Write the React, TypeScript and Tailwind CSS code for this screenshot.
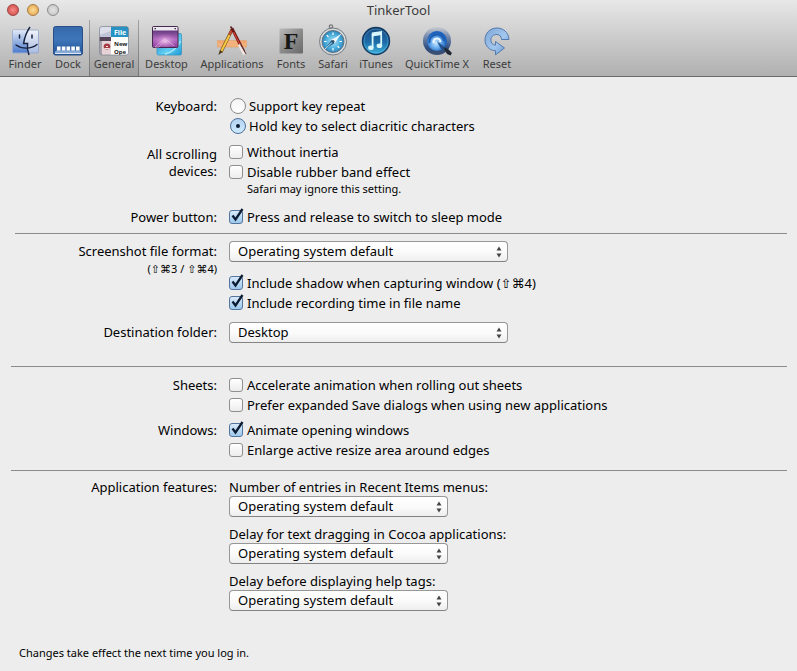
import { useState } from 'react';
import type { ReactNode } from 'react';

function FinderIcon() {
  return (
    <svg viewBox="0 0 30 30" className="w-[30px] h-[30px]">
      <defs>
        <linearGradient id="finderLeft" x1="0" y1="0" x2="0" y2="1">
          <stop offset="0" stopColor="#dfe8f8" />
          <stop offset="1" stopColor="#4d7ccb" />
        </linearGradient>
        <linearGradient id="finderRight" x1="0" y1="0" x2="0" y2="1">
          <stop offset="0" stopColor="#f1f4fb" />
          <stop offset="1" stopColor="#a9bce2" />
        </linearGradient>
      </defs>
      <rect x="2.500" y="4" width="26" height="23" rx="1" fill="url(#finderRight)" stroke="#8fa3cb" strokeWidth="0.8" />
      <path d="M3 4.4H17C15.500 9 14.500 13 14 17H17.200C17 20 17.200 23 18 26.600H3Z" fill="url(#finderLeft)" />
      <path d="M20 1C16.500 6 14.400 12 13.600 17.500H17.600C17 21 17.500 25 19 29" fill="none" stroke="#15213f" strokeWidth="1.400" />
      <path d="M9.500 9V12M22 9V12" stroke="#15213f" strokeWidth="1.500" strokeLinecap="round" />
      <path d="M6 19C12 23.300 21 23.300 27 18.500" fill="none" stroke="#15213f" strokeWidth="1.400" strokeLinecap="round" />
    </svg>
  );
}

function DockIcon() {
  return (
    <svg viewBox="0 0 30 30" className="w-[30px] h-[30px]">
      <defs>
        <linearGradient id="dockBg" x1="0" y1="0" x2="0" y2="1">
          <stop offset="0" stopColor="#3468ab" />
          <stop offset="0.450" stopColor="#3f76ba" />
          <stop offset="1" stopColor="#1f5194" />
        </linearGradient>
      </defs>
      <rect x="0.500" y="0.500" width="29" height="28.500" rx="2" fill="url(#dockBg)" stroke="#2a4f86" />
      <path d="M3 24.500H27L28.500 27H1.500Z" fill="#86a9d6" />
      <path d="M2 27.500H28" stroke="#dbe7f5" />
      <path d="M4 20.500h3.600v4H4zM8.800 20.500h3.600v4H8.800zM13.500 20.500h3.600v4h-3.600zM18.300 20.500h3.600v4h-3.600zM23 20.500h3.600v4H23z" fill="#fff" />
    </svg>
  );
}

function GeneralIcon() {
  return (
    <svg viewBox="0 0 30 30" className="w-[30px] h-[30px]">
      <defs>
        <clipPath id="generalClip">
          <rect x="0.500" y="0.500" width="29" height="28.500" rx="2.500" />
        </clipPath>
      </defs>
      <g clipPath="url(#generalClip)">
        <rect width="30" height="30" fill="#fff" />
        <rect width="12" height="11" fill="#bfc4d6" />
        <path d="M0 0H12V5L0 9Z" fill="#dcdfea" />
        <rect x="12" width="18" height="11" fill="#2793c4" />
        <rect y="11" width="12" height="4" fill="#554357" />
        <rect x="3" y="15" width="9" height="15" fill="#e6d3d7" />
        <rect y="15" width="3" height="15" fill="#a8a1ac" />
        <ellipse cx="8" cy="20.500" rx="3.300" ry="3" fill="#a63a42" />
        <path d="M5.500 22.500H10.500M7 20.500H9" stroke="#f6e4e4" />
        <text x="15" y="8.500" fontFamily="Noto Sans, sans-serif" fontSize="7" fontWeight="700" fill="#fff">File</text>
        <text x="15" y="19.500" fontFamily="Noto Sans, sans-serif" fontSize="6" fontWeight="700" fill="#222">New</text>
        <text x="15" y="28" fontFamily="Noto Sans, sans-serif" fontSize="6" fontWeight="700" fill="#222">Ope</text>
      </g>
      <rect x="0.500" y="0.500" width="29" height="28.500" rx="2.500" fill="none" stroke="#6b7380" strokeOpacity="0.600" />
    </svg>
  );
}

function DesktopIcon() {
  return (
    <svg viewBox="0 0 30 30" className="w-[30px] h-[30px]">
      <defs>
        <linearGradient id="deskFront" x1="0" y1="0" x2="0" y2="1">
          <stop offset="0.150" stopColor="#5d3478" />
          <stop offset="0.600" stopColor="#b069bd" />
          <stop offset="1" stopColor="#8b3f9c" />
        </linearGradient>
        <radialGradient id="deskGlow" cx="0.500" cy="0.650" r="0.500">
          <stop offset="0" stopColor="#f3cdf0" stopOpacity="0.900" />
          <stop offset="1" stopColor="#c979cf" stopOpacity="0" />
        </radialGradient>
        <linearGradient id="deskBack" x1="0" y1="0" x2="1" y2="1">
          <stop offset="0" stopColor="#1d7fc0" />
          <stop offset="0.600" stopColor="#5fcff2" />
          <stop offset="1" stopColor="#1e97d3" />
        </linearGradient>
      </defs>
      <rect x="5" y="7.500" width="24.500" height="21.500" rx="1.500" fill="url(#deskBack)" stroke="#2d8fbd" strokeWidth="0.700" />
      <path d="M13 28C18 27 25 23 28.500 15" fill="none" stroke="#b9ecfb" strokeWidth="1.800" opacity="0.800" />
      <rect x="0.500" y="0.500" width="25.500" height="21" rx="1.200" fill="url(#deskFront)" stroke="#46294f" />
      <rect x="1" y="5" width="24.500" height="16" fill="url(#deskGlow)" />
      <path d="M13 12L3 21H7L13.500 13L22 20" fill="none" stroke="#f3c6f0" strokeWidth="0.900" opacity="0.600" />
      <rect x="1" y="1" width="24.500" height="3.500" fill="#ece8ef" />
      <path d="M2.500 2.700H4M22.500 2.700H24" stroke="#3c3340" strokeWidth="1.300" />
    </svg>
  );
}

function ApplicationsIcon() {
  return (
    <svg viewBox="0 0 30 30" className="w-[30px] h-[30px]">
      <rect x="0.500" y="14.500" width="29" height="6.500" fill="#f3b27b" stroke="#e39f6a" strokeWidth="0.600" />
      <path d="M3 15V17.500M6 15V17.500M9 15V17.500M21 15V17.500M24 15V17.500M27 15V17.500" stroke="#d98b55" strokeWidth="0.700" />
      <path d="M15.300 3L4 26" stroke="#7b4b18" strokeWidth="3.200" />
      <path d="M12.500 9L4.200 25.500" stroke="#f5cb42" strokeWidth="2" />
      <path d="M15.500 2.500L12.500 8.500" stroke="#c94b3b" strokeWidth="2" />
      <path d="M3 24L1.300 29L5.600 26Z" fill="#453620" />
      <path d="M15 2.500L27 26" stroke="#6c1715" strokeWidth="2.800" />
      <path d="M16.500 6L23 18.500" stroke="#d54435" strokeWidth="1.200" />
      <path d="M22 18.500L27.500 28.500" stroke="#eee7e3" strokeWidth="2.600" />
      <path d="M23.500 18.500L29 28" stroke="#5f302b" strokeWidth="1" />
      <path d="M13.500 0.500L16 3.500" stroke="#5b2424" strokeWidth="1.600" />
    </svg>
  );
}

function FontsIcon() {
  return (
    <svg viewBox="0 0 30 30" className="w-[30px] h-[30px]">
      <defs>
        <linearGradient id="fontsBg" x1="0" y1="0" x2="1" y2="1">
          <stop offset="0" stopColor="#bababa" />
          <stop offset="0.500" stopColor="#8c8c8c" />
          <stop offset="1" stopColor="#686868" />
        </linearGradient>
      </defs>
      <rect x="3.500" y="2.500" width="23.500" height="25" rx="1" fill="url(#fontsBg)" />
      <text x="15" y="22.500" textAnchor="middle" fontFamily="Liberation Serif, serif" fontSize="24" fontWeight="700" fill="#171717">F</text>
    </svg>
  );
}

function SafariIcon() {
  return (
    <svg viewBox="0 0 30 32" className="w-[30px] h-[32px]">
      <defs>
        <radialGradient id="safariFace">
          <stop offset="0" stopColor="#b9e6f8" />
          <stop offset="0.600" stopColor="#4fb2dd" />
          <stop offset="1" stopColor="#2e86be" />
        </radialGradient>
      </defs>
      <circle cx="13" cy="2.500" r="1.700" fill="none" stroke="#777" strokeWidth="1.200" />
      <circle cx="15" cy="17.500" r="13.500" fill="#d6dbdd" stroke="#747a80" />
      <circle cx="15" cy="17.500" r="11" fill="url(#safariFace)" stroke="#66747f" />
      <path d="M15 8.500V11M15 24V26.500M6 17.500H8.500M21.500 17.500H24M8.700 11.200L10.500 13M19.500 22L21.300 23.800" stroke="#fff" strokeWidth="1.200" />
      <path d="M23 10L16.600 19.300L13.400 16Z" fill="#f4fbff" />
      <path d="M7 25L16.600 19.300L13.400 16Z" fill="#276b9d" />
      <path d="M7 25L23 10" stroke="#e5f5fc" strokeWidth="0.800" />
      <circle cx="15" cy="17.500" r="1.500" fill="#31505f" />
    </svg>
  );
}

function ITunesIcon() {
  return (
    <svg viewBox="0 0 30 30" className="w-[30px] h-[30px]">
      <defs>
        <linearGradient id="itunesBg" x1="0" y1="0" x2="0" y2="1">
          <stop offset="0" stopColor="#1a4a80" />
          <stop offset="0.550" stopColor="#1c6daa" />
          <stop offset="1" stopColor="#3fb4de" />
        </linearGradient>
      </defs>
      <circle cx="15" cy="15" r="13.500" fill="url(#itunesBg)" stroke="#123a62" strokeWidth="1.400" />
      <circle cx="15" cy="15" r="12" fill="none" stroke="#7cc5e7" strokeWidth="0.700" opacity="0.500" />
      <path d="M10.800 6.500L21 5V9L10.800 10.500Z" fill="#d7f6fc" />
      <path d="M11.600 8V21.500M20.200 7V19.500" fill="none" stroke="#d7f6fc" strokeWidth="1.800" />
      <ellipse cx="9.900" cy="21.700" rx="2.800" ry="2.300" fill="#d7f6fc" />
      <ellipse cx="18.400" cy="19.700" rx="2.800" ry="2.300" fill="#d7f6fc" />
    </svg>
  );
}

function QuickTimeIcon() {
  return (
    <svg viewBox="0 0 32 30" className="w-[32px] h-[30px]">
      <defs>
        <linearGradient id="qtRing" x1="0" y1="0" x2="0" y2="1">
          <stop offset="0" stopColor="#c9cdd4" />
          <stop offset="0.350" stopColor="#7589ab" />
          <stop offset="0.750" stopColor="#2e4d80" />
          <stop offset="1" stopColor="#3d4f70" />
        </linearGradient>
        <radialGradient id="qtInner" cx="0.450" cy="0.600">
          <stop offset="0" stopColor="#cfe8fd" />
          <stop offset="0.500" stopColor="#6aaeee" />
          <stop offset="1" stopColor="#1b62bd" />
        </radialGradient>
      </defs>
      <circle cx="16" cy="15" r="14" fill="url(#qtRing)" />
      <circle cx="16" cy="15" r="10" fill="url(#qtInner)" />
      <path d="M8.500 17C7.500 6.500 22.500 5.500 23 15" fill="none" stroke="#1f5cb0" strokeWidth="1.800" />
      <path d="M12.500 17C12 11.500 19.500 11 19.500 16" fill="none" stroke="#eef8ff" strokeWidth="2" />
      <path d="M16 15.500L22.500 20L24 24L20 23Z" fill="#24528f" />
      <path d="M22 21L27 23L31 27L29.500 29.500L26 28Z" fill="#222a38" />
    </svg>
  );
}

function ResetIcon() {
  return (
    <svg viewBox="0 0 30 30" className="w-[30px] h-[30px]">
      <defs>
        <linearGradient id="resetFill" x1="0" y1="0" x2="1" y2="1">
          <stop offset="0" stopColor="#7da4d6" />
          <stop offset="0.550" stopColor="#a3c8ee" />
          <stop offset="1" stopColor="#5a8fce" />
        </linearGradient>
      </defs>
      <path
        d="M27 13.500C26.500 6 21 2 14.800 2C7.500 2.200 3 7.500 3 14C3 20 7.500 24.500 13.500 24.700V28.800L22.500 22L13.500 15.500V19.200C10.500 18.800 8.800 16.800 8.800 14C9 10.500 11.800 8.300 15 8.500C17.800 8.700 19.500 10.700 19.500 13.500Z"
        fill="url(#resetFill)"
        stroke="#5379ae"
        strokeWidth="1"
        strokeLinejoin="round"
      />
    </svg>
  );
}

const tabs = [
  { name: 'Finder', width: 'w-[44px]', icon: <FinderIcon /> },
  { name: 'Dock', width: 'w-[42px]', icon: <DockIcon /> },
  { name: 'General', width: 'w-[50px]', icon: <GeneralIcon /> },
  { name: 'Desktop', width: 'w-[55px]', icon: <DesktopIcon /> },
  { name: 'Applications', width: 'w-[76px]', icon: <ApplicationsIcon /> },
  { name: 'Fonts', width: 'w-[42px]', icon: <FontsIcon /> },
  { name: 'Safari', width: 'w-[42px]', icon: <SafariIcon /> },
  { name: 'iTunes', width: 'w-[44px]', icon: <ITunesIcon /> },
  { name: 'QuickTime X', width: 'w-[78px]', icon: <QuickTimeIcon /> },
  { name: 'Reset', width: 'w-[42px]', icon: <ResetIcon /> },
];

function Row({ label, children, className = '' }: { label: ReactNode; children: ReactNode; className?: string }) {
  return (
    <div className={`grid grid-cols-[217px_1fr] gap-x-3 ${className}`}>
      <div className="text-right">{label}</div>
      <div>{children}</div>
    </div>
  );
}

function Checkbox({ label, defaultChecked = false }: { label: string; defaultChecked?: boolean }) {
  return (
    <label className="flex w-fit items-center gap-1 h-5 whitespace-nowrap">
      <span className="relative flex">
        <input
          type="checkbox"
          defaultChecked={defaultChecked}
          className="peer appearance-none w-3.5 h-3.5 rounded-[3px] border border-[#8f8f8f] bg-linear-to-b from-white to-[#ececec] checked:border-[#54759c] checked:from-[#d9eafa] checked:to-[#9cc8ec]"
        />
        <svg viewBox="0 0 16 16" className="hidden peer-checked:block pointer-events-none absolute left-0 -top-0.5 w-4 h-4">
          <path d="M3.500 7.500L6.500 11.500L13.500 1" fill="none" stroke="#0c1c33" strokeWidth="2.300" />
        </svg>
      </span>
      {label}
    </label>
  );
}

function Radio({ label, defaultChecked = false }: { label: string; defaultChecked?: boolean }) {
  return (
    <label className="flex w-fit items-center gap-[3px] h-5 pl-px whitespace-nowrap">
      <span className="relative flex">
        <input
          type="radio"
          name="keyboard"
          defaultChecked={defaultChecked}
          className="peer appearance-none w-4 h-4 rounded-full border border-[#8a8a8a] bg-linear-to-b from-[#f4f4f4] to-white checked:border-[#4d6f9b] checked:from-[#b4d3f1] checked:to-[#cdeafd]"
        />
        <span className="hidden peer-checked:block pointer-events-none absolute left-[6px] top-[6px] w-1 h-1 rounded-full bg-[#0c1c33]"></span>
      </span>
      {label}
    </label>
  );
}

function Popup({ id, value, width, options }: { id: string; value: string; width: string; options: string[] }) {
  return (
    <div className={`relative ${width}`}>
      <select
        id={id}
        defaultValue={value}
        className="block appearance-none w-full h-[21px] pl-2 pr-5 leading-[19px] rounded-[4px] border border-[#979797] border-b-[#838383] bg-linear-to-b from-white via-[#fbfbfb] to-[#eeeeee]"
      >
        {options.map(option => (
          <option key={option}>{option}</option>
        ))}
      </select>
      <svg viewBox="0 0 6 12" className="pointer-events-none absolute right-[6px] top-[5px] w-1.5 h-3">
        <path d="M3 0.500L5.500 4.500H0.500ZM3 11.500L5.500 7.500H0.500Z" fill="#444" />
      </svg>
    </div>
  );
}

const features = [
  { id: 'recent-items', label: 'Number of entries in Recent Items menus:' },
  { id: 'text-dragging', label: 'Delay for text dragging in Cocoa applications:' },
  { id: 'help-tags', label: 'Delay before displaying help tags:' },
];

export default function App() {
  const [active, setActive] = useState('General');

  return (
    <div className="min-h-screen bg-[#ededed] font-['Noto_Sans','DejaVu_Sans',sans-serif] text-[13px] leading-5 text-black">
      <header className="bg-linear-to-b from-[#e8e8e8] to-[#b0b0b0] border-b border-[#6a6a6a] text-[#3c3c3c]">
        <div className="grid grid-cols-[1fr_auto_1fr] items-center h-5">
          <div className="flex gap-2 pl-[7px]">
            <button aria-label="Close" className="w-3 h-3 rounded-full border border-[#9b4444] bg-radial from-[#f58c88] to-[#cc3e3e]"></button>
            <button aria-label="Minimize" className="w-3 h-3 rounded-full border border-[#a87a42] bg-radial from-[#fbdc94] to-[#e2a046]"></button>
            <button aria-label="Zoom" className="w-3 h-3 rounded-full border border-[#8c8c8c] bg-radial from-[#e4e4e4] to-[#c0c0c0]"></button>
          </div>
          <h1>TinkerTool</h1>
        </div>
        <nav className="flex h-14 pl-[3px]">
          {tabs.map(tab => (
            <button
              key={tab.name}
              onClick={() => setActive(tab.name)}
              className={`flex flex-col items-center shrink-0 pt-1 text-[11px] leading-4 whitespace-nowrap ${tab.width} ${
                active === tab.name ? 'border-x border-black/25 bg-linear-to-b from-transparent to-black/10' : ''
              }`}
            >
              <span className="flex items-end justify-center h-8">{tab.icon}</span>
              {tab.name}
            </button>
          ))}
        </nav>
      </header>

      <main>
        <section className="pt-[19px] pb-1.5">
          <Row label="Keyboard:">
            <Radio label="Support key repeat" />
            <Radio label="Hold key to select diacritic characters" defaultChecked />
          </Row>
          <Row
            className="mt-1.5"
            label={
              <div className="pt-1 leading-[17px]">
                All scrolling
                <br />
                devices:
              </div>
            }
          >
            <Checkbox label="Without inertia" />
            <Checkbox label="Disable rubber band effect" />
            <p className="pl-[18px] text-[11px] leading-[14px]">Safari may ignore this setting.</p>
          </Row>
          <Row className="mt-[11px]" label="Power button:">
            <Checkbox label="Press and release to switch to sleep mode" defaultChecked />
          </Row>
        </section>

        <hr className="ml-[15px] mr-2.5 border-[#8c8c8c]" />

        <section className="pt-[7px] pb-[23px]">
          <Row
            label={
              <>
                <label htmlFor="format" className="block">Screenshot file format:</label>
                <p className="text-[11px] leading-4">(⇧⌘3 / ⇧⌘4)</p>
              </>
            }
          >
            <Popup id="format" value="Operating system default" width="w-[279px]" options={['Operating system default', 'PNG', 'JPEG', 'TIFF', 'PDF']} />
            <div className="mt-[11px]">
              <Checkbox label="Include shadow when capturing window (⇧⌘4)" defaultChecked />
              <Checkbox label="Include recording time in file name" defaultChecked />
            </div>
          </Row>
          <Row className="mt-[9px]" label={<label htmlFor="destination">Destination folder:</label>}>
            <Popup id="destination" value="Desktop" width="w-[279px]" options={['Desktop', 'Documents', 'Pictures']} />
          </Row>
        </section>

        <hr className="ml-[11px] mr-2.5 border-[#8c8c8c]" />

        <section className="pt-2 pb-2.5">
          <Row label="Sheets:">
            <Checkbox label="Accelerate animation when rolling out sheets" />
            <Checkbox label="Prefer expanded Save dialogs when using new applications" />
          </Row>
          <Row className="mt-[5px]" label="Windows:">
            <Checkbox label="Animate opening windows" defaultChecked />
            <Checkbox label="Enlarge active resize area around edges" />
          </Row>
        </section>

        <hr className="ml-[11px] mr-2.5 border-[#8c8c8c]" />

        <section className="pt-[7px] leading-[18px]">
          <Row label="Application features:">
            <div className="flex flex-col gap-2">
              {features.map(feature => (
                <div key={feature.id}>
                  <label htmlFor={feature.id} className="block">{feature.label}</label>
                  <Popup id={feature.id} value="Operating system default" width="w-[219px]" options={['Operating system default', 'Custom']} />
                </div>
              ))}
            </div>
          </Row>
        </section>
      </main>

      <footer className="mt-[35px] pl-[19px] text-[11px] leading-[14px]">Changes take effect the next time you log in.</footer>
    </div>
  );
}
